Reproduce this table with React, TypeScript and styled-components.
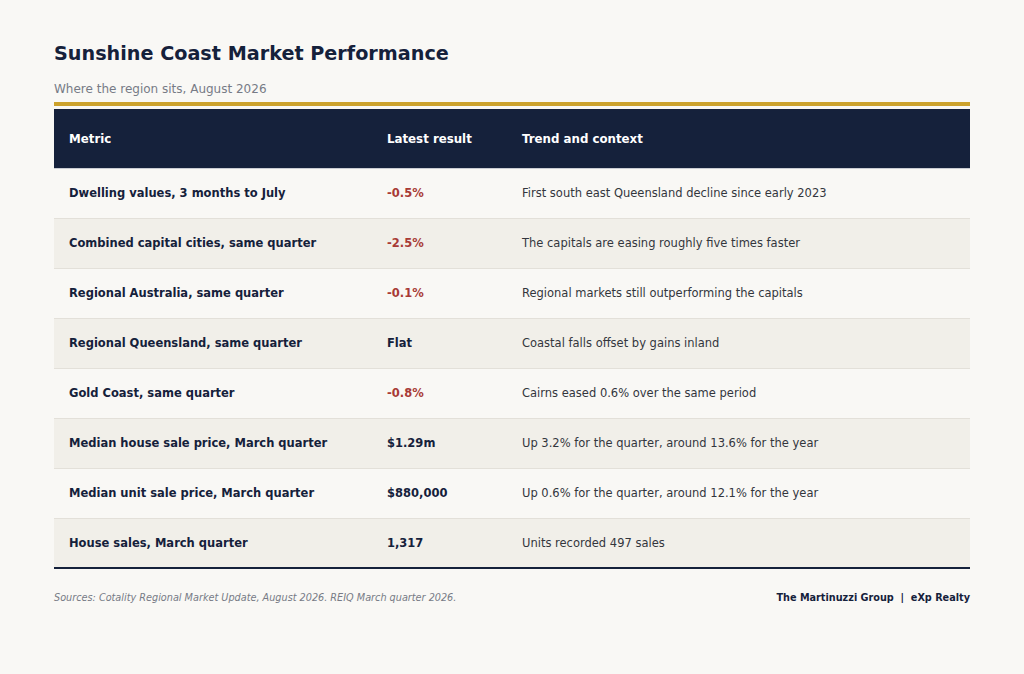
import React from 'react';
import styled, { createGlobalStyle } from 'styled-components';

type Row = {
    metric: string;
    result: string;
    negative?: boolean;
    context: string;
};

const rows: Row[] = [
    { metric: 'Dwelling values, 3 months to July', result: '-0.5%', negative: true, context: 'First south east Queensland decline since early 2023' },
    { metric: 'Combined capital cities, same quarter', result: '-2.5%', negative: true, context: 'The capitals are easing roughly five times faster' },
    { metric: 'Regional Australia, same quarter', result: '-0.1%', negative: true, context: 'Regional markets still outperforming the capitals' },
    { metric: 'Regional Queensland, same quarter', result: 'Flat', context: 'Coastal falls offset by gains inland' },
    { metric: 'Gold Coast, same quarter', result: '-0.8%', negative: true, context: 'Cairns eased 0.6% over the same period' },
    { metric: 'Median house sale price, March quarter', result: '$1.29m', context: 'Up 3.2% for the quarter, around 13.6% for the year' },
    { metric: 'Median unit sale price, March quarter', result: '$880,000', context: 'Up 0.6% for the quarter, around 12.1% for the year' },
    { metric: 'House sales, March quarter', result: '1,317', context: 'Units recorded 497 sales' },
];

function App() {
    return (
        <Page>
            <GlobalStyle />
            <Title>Sunshine Coast Market Performance</Title>
            <Subtitle>Where the region sits, August 2026</Subtitle>
            <GoldRule />
            <Table>
                <thead>
                    <HeadRow>
                        <HeadCell>Metric</HeadCell>
                        <HeadCell>Latest result</HeadCell>
                        <HeadCell>Trend and context</HeadCell>
                    </HeadRow>
                </thead>
                <tbody>
                    {rows.map((row, i) => (
                        <BodyRow key={row.metric} $striped={i % 2 === 1}>
                            <MetricCell>{row.metric}</MetricCell>
                            <ResultCell $negative={row.negative}>{row.result}</ResultCell>
                            <ContextCell>{row.context}</ContextCell>
                        </BodyRow>
                    ))}
                </tbody>
            </Table>
            <Footer>
                <Sources>Sources: Cotality Regional Market Update, August 2026. REIQ March quarter 2026.</Sources>
                <Brand>The Martinuzzi Group &nbsp;|&nbsp; eXp Realty</Brand>
            </Footer>
        </Page>
    );
}

const GlobalStyle = createGlobalStyle`
    html, body {
        margin: 0;
        padding: 0;
        background: #f9f8f5;
    }
    body {
        font-family: "DejaVu Sans", "Liberation Sans", sans-serif;
    }
`;

const Page = styled.div`
    width: 916px;
    margin: 0 auto;
    padding: 42px 0 0;
`;

const Title = styled.h1`
    margin: 0;
    font-size: 19.2px;
    line-height: 24px;
    font-weight: 700;
    color: #15213b;
`;

const Subtitle = styled.p`
    margin: 16px 0 0;
    font-size: 12px;
    line-height: 14px;
    color: #777b86;
`;

const GoldRule = styled.div`
    height: 4px;
    margin-top: 6px;
    background: #cca22c;
`;

const Table = styled.table`
    width: 100%;
    margin-top: 3px;
    border-collapse: collapse;
    table-layout: fixed;
    border-bottom: 2px solid #15213b;

    th, td { box-sizing: border-box; }
    th:nth-child(1), td:nth-child(1) { width: 318px; }
    th:nth-child(2), td:nth-child(2) { width: 135px; }
`;

const HeadRow = styled.tr`
    height: 59px;
    background: #15213b;
    border-bottom: 1px solid #c9ccd3;
`;

const HeadCell = styled.th`
    padding: 1px 15px 0;
    text-align: left;
    font-size: 11.8px;
    font-weight: 700;
    color: #ffffff;
`;

const BodyRow = styled.tr<{ $striped: boolean }>`
    height: 50px;
    background: ${(p) => (p.$striped ? '#f1efe9' : '#f9f8f5')};
    border-top: 1px solid #e3e0d9;

    &:first-child {
        border-top: none;
    }
`;

const Cell = styled.td`
    padding: 0 15px;
    font-size: 11.5px;
`;

const MetricCell = styled(Cell)`
    font-weight: 700;
    color: #15213b;
`;

const ResultCell = styled(Cell)<{ $negative?: boolean }>`
    font-weight: 700;
    color: ${(p) => (p.$negative ? '#a83a36' : '#15213b')};
`;

const ContextCell = styled(Cell)`
    color: #33363d;
`;

const Footer = styled.div`
    display: flex;
    justify-content: space-between;
    align-items: baseline;
    margin-top: 23px;
`;

const Sources = styled.span`
    font-size: 9.7px;
    font-style: italic;
    color: #777b86;
`;

const Brand = styled.span`
    font-size: 9.7px;
    font-weight: 700;
    color: #15213b;
`;

export default App;
